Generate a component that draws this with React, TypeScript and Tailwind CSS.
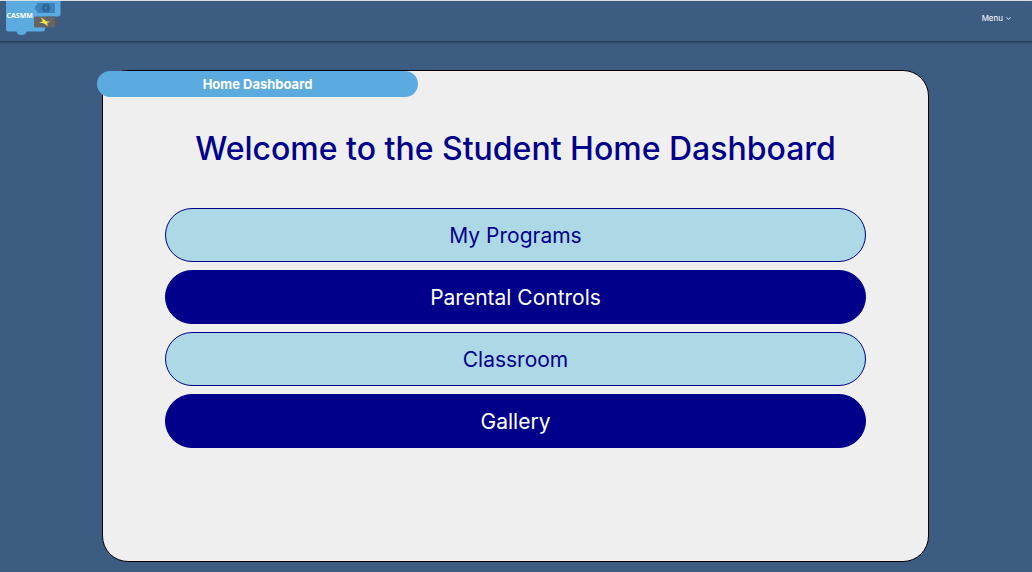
import { ChevronDown } from "lucide-react";

const links = ["My Programs", "Parental Controls", "Classroom", "Gallery"];

function Logo() {
  return (
    <svg viewBox="0 0 56 35" className="block h-[35px] w-14" role="img" aria-label="CASMM">
      <path
        d="M0 0H54.5V13Q54.5 15.5 52 15.5H39V28Q39 30.5 36.5 30.5H20.5Q20 34 15.5 34Q11 34 10.5 30.5H2Q0 30.5 0 28.5Z"
        fill="#5babe0"
      />
      <path d="M32 2H49V12H32Q31 12 31 10Q29 9.5 29 7Q29 4.5 31 4Q31 2 32 2Z" fill="#3b84bd" />
      <g fill="none" stroke="#255b8a" strokeWidth="0.8">
        <ellipse cx="40" cy="7" rx="4.5" ry="1.7" />
        <ellipse cx="40" cy="7" rx="4.5" ry="1.7" transform="rotate(60 40 7)" />
        <ellipse cx="40" cy="7" rx="4.5" ry="1.7" transform="rotate(120 40 7)" />
      </g>
      <path d="M29 15.5H48Q49 15.5 49 17V25Q49 26.5 48 26.5H29Q28 26.5 28 25V17Q28 15.5 29 15.5Z" fill="#626466" />
      <path d="M50 18H52V24H50Z" fill="#5b5752" />
      <path d="M34.5 16.5L39.5 19.3L39.2 20.3L44.5 20.8L41 22L42 25L37.5 22.2L33 21.5L37 20.3Z" fill="#f8e540" />
      <text x="0.5" y="17" fill="#fff" fontSize="7" fontWeight="700" fontFamily="Open Sans, sans-serif">
        CASMM
      </text>
    </svg>
  );
}

export default function App() {
  return (
    <div className="flex min-h-screen flex-col border-t border-[#e4e9ee] bg-[#3d5c82] font-['Inter',sans-serif]">
      <header className="flex h-10 items-start justify-between pr-5 pl-[6px] shadow-[0_1px_2px_rgba(0,0,0,0.5)]">
        <a href="#home">
          <Logo />
        </a>
        <button type="button" className="mt-[11px] flex items-center gap-[2px] text-[8px] leading-3 text-white">
          Menu
          <ChevronDown size={7} strokeWidth={3} aria-hidden="true" />
        </button>
      </header>
      <main className="mt-[29px] mr-[103px] mb-[10px] ml-[102px] flex flex-1 flex-col rounded-[26px] border border-black bg-[#efefef]">
        <div className="-ml-[6px] h-[26px] w-[321px] rounded-full bg-[#5babe0] text-center text-[13px] leading-[26px] font-bold text-white">
          Home Dashboard
        </div>
        <h1 className="mt-[30px] text-center text-[32px] leading-[44px] font-medium text-[#00008b]">
          Welcome to the Student Home Dashboard
        </h1>
        <nav className="mt-[37px] flex flex-col gap-2 px-[62px]">
          {links.map((label, i) => (
            <button
              key={label}
              type="button"
              className={`h-[54px] rounded-[27px] border border-[#00008b] pt-[2px] text-[21px] leading-7 ${
                i % 2 ? "bg-[#00008b] text-white" : "bg-[#add8e6] text-[#00008b]"
              }`}
            >
              {label}
            </button>
          ))}
        </nav>
      </main>
    </div>
  );
}
